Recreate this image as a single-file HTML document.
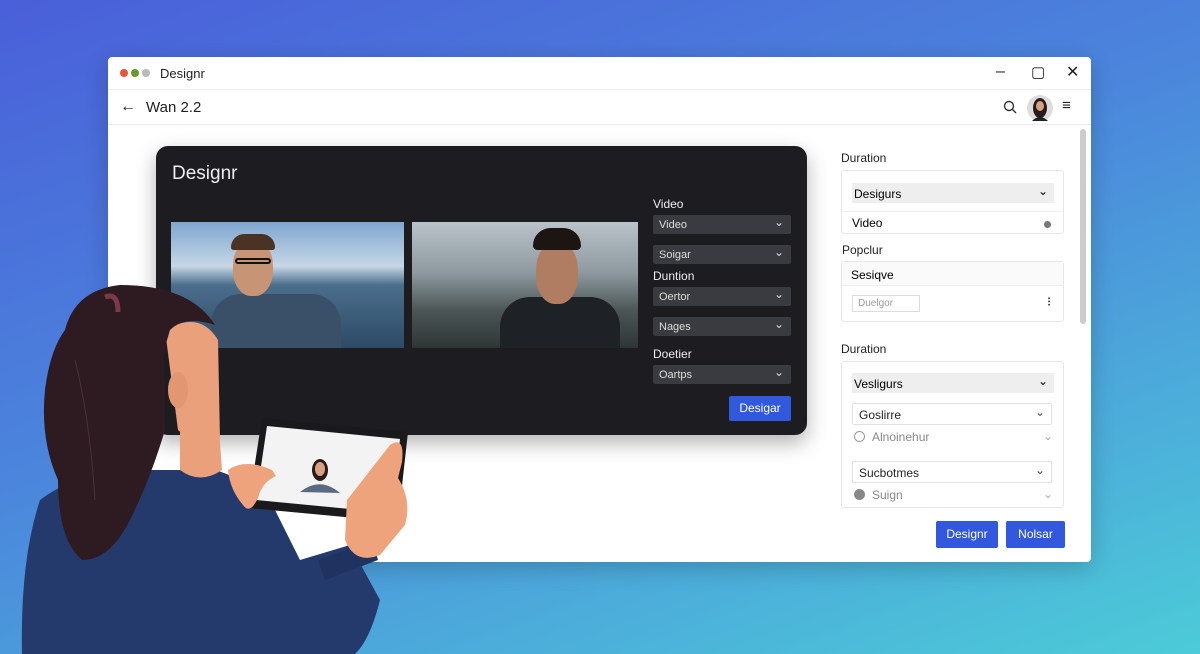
<!DOCTYPE html>
<html><head><meta charset="utf-8"><style>
*{margin:0;padding:0;box-sizing:border-box}
body{width:1200px;height:654px;overflow:hidden;font-family:"Liberation Sans",sans-serif;background:linear-gradient(160deg,#4a5fd9 0%,#4b86dc 45%,#4ccbd8 100%);position:relative}
.win{position:absolute;left:108px;top:57px;width:983px;height:505px;background:#fff;border-radius:4px;box-shadow:0 6px 24px rgba(0,0,0,.2)}
.tb{height:33px;border-bottom:1px solid #eee;position:relative}
.dot{position:absolute;top:12px;width:8px;height:8px;border-radius:50%}
.t{position:absolute;font-size:13px;color:#222}
.nav{height:35px;border-bottom:1px solid #eee;position:relative}
.dark{position:absolute;left:48px;top:89px;width:651px;height:289px;background:#1d1d21;border-radius:12px;box-shadow:0 8px 20px rgba(0,0,0,.3)}
.lbl{position:absolute;color:#eee;font-size:12px}
.sel{position:absolute;left:497px;width:138px;height:19px;background:#3a3b40;border-radius:2px;color:#ddd;font-size:11px;padding:4px 6px}
.sel:after{content:"⌄";position:absolute;right:7px;top:0px;font-size:12px}
.rp{position:absolute;color:#222;font-size:12px}
.box{position:absolute;border:1px solid #e6e6e6;border-radius:3px;background:#fff}
.btn{position:absolute;background:#3158dd;color:#fff;font-size:12px;text-align:center;border-radius:2px;line-height:26px}
.in{position:absolute;border:1px solid #e2e2e2;border-radius:2px;font-size:12px;padding:4px 6px;color:#222}
.in:after{content:"⌄";position:absolute;right:6px;top:1px;color:#555}
</style></head><body>
<div class="win">
 <div class="tb">
  <div class="dot" style="left:12px;background:#e8553b"></div><div class="dot" style="left:23px;background:#6a9a2a"></div><div class="dot" style="left:34px;background:#bbb"></div>
  <div class="t" style="left:52px;top:9px">Designr</div>
  <div class="t" style="left:888px;top:6px;font-size:16px">–</div>
  <div class="t" style="left:923px;top:6px;font-size:15px">▢</div>
  <div class="t" style="left:958px;top:5px;font-size:16px">✕</div>
 </div>
 <div class="nav">
  <div class="t" style="left:12px;top:8px;font-size:16px">←</div>
  <div class="t" style="left:38px;top:9px;font-size:15px">Wan 2.2</div>
  <svg style="position:absolute;left:895px;top:10px" width="14" height="14"><circle cx="6" cy="6" r="4.5" fill="none" stroke="#333" stroke-width="1.4"/><line x1="9.5" y1="9.5" x2="13" y2="13" stroke="#333" stroke-width="1.4"/></svg>
  <svg style="position:absolute;left:918px;top:4px" width="28" height="28"><circle cx="14" cy="14" r="13" fill="#ddd"/><ellipse cx="14" cy="14" rx="7" ry="10" fill="#2a1a18"/><ellipse cx="14" cy="12" rx="4" ry="5" fill="#d9a184"/><path d="M6 27 Q14 19 22 27Z" fill="#222"/></svg>
  <div class="t" style="left:954px;top:7px;font-size:15px">≡</div>
 </div>
 <div style="position:absolute;left:972px;top:72px;width:6px;height:195px;background:#ccc;border-radius:3px"></div>
 <div class="dark">
  <div class="lbl" style="left:16px;top:17px;font-size:19px">Designr</div>
  <div style="position:absolute;left:15px;top:76px;width:233px;height:126px;overflow:hidden;background:linear-gradient(180deg,#7fa6d0 0%,#c6d7e6 35%,#4b6e8c 50%,#2d4a66 100%)">
   <div style="position:absolute;left:40px;top:72px;width:130px;height:60px;background:#3a4f68;border-radius:30px 30px 0 0"></div>
   <div style="position:absolute;left:62px;top:18px;width:40px;height:56px;background:#c89476;border-radius:45%"></div>
   <div style="position:absolute;left:60px;top:12px;width:44px;height:16px;background:#4a3325;border-radius:20px 20px 4px 4px"></div>
   <div style="position:absolute;left:64px;top:36px;width:36px;height:6px;border:2px solid #111;border-radius:3px"></div>
  </div>
  <div style="position:absolute;left:256px;top:76px;width:226px;height:126px;overflow:hidden;background:linear-gradient(180deg,#b9c3c9 0%,#8e9aa0 40%,#4c5656 70%,#2e3535 100%)">
   <div style="position:absolute;left:88px;top:75px;width:120px;height:55px;background:#1e2226;border-radius:30px 30px 0 0"></div>
   <div style="position:absolute;left:124px;top:20px;width:42px;height:62px;background:#b07d62;border-radius:45%"></div>
   <div style="position:absolute;left:121px;top:6px;width:48px;height:22px;background:#1c1512;border-radius:24px 24px 6px 6px"></div>
  </div>
  <div class="lbl" style="left:497px;top:51px">Video</div>
  <div class="sel" style="top:69px">Video</div>
  <div class="sel" style="top:99px">Soigar</div>
  <div class="lbl" style="left:497px;top:123px">Duntion</div>
  <div class="sel" style="top:141px">Oertor</div>
  <div class="sel" style="top:171px">Nages</div>
  <div class="lbl" style="left:497px;top:201px">Doetier</div>
  <div class="sel" style="top:219px">Oartps</div>
  <div class="btn" style="left:573px;top:250px;width:62px;height:25px;line-height:25px">Desigar</div>
 </div>
 <div class="rp" style="left:733px;top:94px">Duration</div>
 <div class="box" style="left:733px;top:113px;width:223px;height:64px">
  <div style="position:absolute;left:10px;top:12px;width:202px;height:20px;background:#eee;font-size:12px;padding:4px 2px">Desigurs<span style="position:absolute;right:6px;top:1px">⌄</span></div>
  <div style="position:absolute;left:0;top:40px;width:100%;border-top:1px solid #eee;font-size:12px;padding:4px 10px">Video<span style="position:absolute;right:12px;top:9px;width:7px;height:7px;border-radius:50%;background:#777"></span></div>
 </div>
 <div class="rp" style="left:734px;top:186px">Popclur</div>
 <div class="box" style="left:733px;top:204px;width:223px;height:61px">
  <div style="height:24px;border-bottom:1px solid #eee;background:#fafafa;font-size:12px;padding:6px 9px">Sesiqve</div>
  <div style="position:absolute;left:10px;top:33px;width:68px;height:17px;border:1px solid #ddd;font-size:10px;color:#999;padding:2px 5px">Duelgor</div>
  <div style="position:absolute;left:205px;top:32px;font-size:13px">⁝</div>
 </div>
 <div class="rp" style="left:733px;top:285px">Duration</div>
 <div class="box" style="left:733px;top:304px;width:223px;height:147px">
  <div style="position:absolute;left:10px;top:11px;width:202px;height:20px;background:#eee;font-size:12px;padding:4px 2px">Vesligurs<span style="position:absolute;right:6px;top:1px">⌄</span></div>
  <div class="in" style="left:10px;top:41px;width:200px;height:22px">Goslirre</div>
  <div style="position:absolute;left:12px;top:69px;width:11px;height:11px;border:1px solid #999;border-radius:50%"></div>
  <div style="position:absolute;left:30px;top:68px;font-size:12px;color:#888">Alnoinehur</div>
  <div style="position:absolute;right:10px;top:67px;color:#aaa;font-size:12px">⌄</div>
  <div class="in" style="left:10px;top:99px;width:200px;height:22px">Sucbotmes</div>
  <div style="position:absolute;left:12px;top:127px;width:11px;height:11px;background:#888;border-radius:50%"></div>
  <div style="position:absolute;left:30px;top:126px;font-size:12px;color:#888">Suign</div>
  <div style="position:absolute;right:10px;top:125px;color:#aaa;font-size:12px">⌄</div>
 </div>
 <div class="btn" style="left:828px;top:464px;width:62px;height:27px">Designr</div>
 <div class="btn" style="left:898px;top:464px;width:59px;height:27px">Nolsar</div>
</div>
<svg style="position:absolute;left:0;top:0" width="1200" height="654">
 <!-- shirt -->
 <path d="M22 654 Q20 560 40 500 Q80 470 140 470 L215 470 Q250 480 275 510 L300 560 L330 600 L345 654Z" fill="#253a6c"/>
 <path d="M300 560 L350 545 L380 600 Q370 640 355 654 L330 654Z" fill="#253a6c"/>
 <path d="M318 560 L372 540 L378 560 L325 580Z" fill="#1f3260"/>
 <!-- neck & face -->
 <path d="M180 420 L218 415 L222 470 Q200 485 180 470Z" fill="#e9a07b"/>
 <path d="M165 330 Q200 310 218 340 L220 440 Q200 450 178 430Z" fill="#e9a07b"/>
 <ellipse cx="178" cy="390" rx="10" ry="18" fill="#e29672"/>
 <!-- hair -->
 <path d="M65 330 Q75 290 120 285 Q190 285 215 325 Q185 315 170 330 Q160 360 165 385 L165 430 Q150 480 130 520 Q110 560 82 560 Q58 540 58 480 Q40 440 45 390 Q50 350 65 330Z" fill="#2e1b22"/>
 <path d="M105 297 Q118 292 118 312" stroke="#7a3a46" stroke-width="5" fill="none"/>
 <path d="M75 360 Q90 420 95 500" stroke="#4a2f38" stroke-width="1" fill="none"/>
 <!-- tablet -->
 <path d="M262 418 L408 432 L398 522 L248 508Z" fill="#1a1a1c"/>
 <path d="M267 426 L400 439 L392 513 L256 500Z" fill="#f3f3f3"/>
 <ellipse cx="320" cy="470" rx="8" ry="11" fill="#2a1a18"/>
 <ellipse cx="320" cy="469" rx="5" ry="7" fill="#d9a184"/>
 <path d="M300 492 Q320 476 340 493Z" fill="#5a6a80"/>
 <!-- hands -->
 <path d="M228 470 Q245 458 272 470 L276 476 Q262 482 258 498 Q250 515 243 505 Q230 490 228 470Z" fill="#eea37d"/>
 <path d="M347 500 L390 445 Q405 435 402 462 L398 478 Q412 500 405 525 L380 555 Q355 565 345 540Z" fill="#eea37d"/>
</svg>
</body></html>
